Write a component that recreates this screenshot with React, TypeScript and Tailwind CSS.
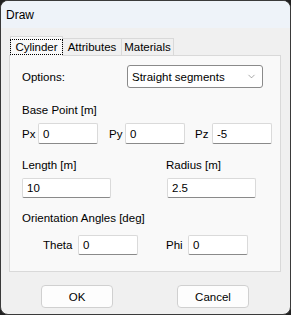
import { ChevronDown } from "lucide-react";

const font = { fontFamily: '"Liberation Sans", Arial, sans-serif' };

const Field = ({ value, w, h = "h-[21px]" }: { value: string; w: string; h?: string }) => (
  <div
    className={`${w} ${h} bg-white border border-[#dadada] border-b-[#8a8a8a] rounded-[2px] flex items-center px-[4px] text-[11.5px] text-black`}
  >
    {value}
  </div>
);

export default function App() {
  return (
    <div className="w-[291px] h-[315px] bg-[#202020]" style={font}>
      <div className="w-[291px] h-[315px] rounded-[8px] border border-[#3a3a3a] bg-[#f0f0f0] overflow-hidden flex flex-col text-[11.5px] text-black leading-[16px]">
        {/* title bar */}
        <div className="h-[27px] shrink-0 bg-[#eef3f9] flex items-center pl-[5px] text-[12px]">Draw</div>

        {/* tabs */}
        <div className="flex items-end pl-[9px] mt-[8px] h-[19px]">
          <div className="relative z-10 h-[20px] w-[53px] bg-[#f9f9f9] border border-[#d9d9d9] border-b-0 flex items-center justify-center mb-[-1px]">
            <span className="border border-dotted border-black px-[4px] leading-[14px]">Cylinder</span>
          </div>
          <div className="h-[17px] w-[59px] bg-[#f0f0f0] border border-[#d9d9d9] border-l-0 border-b-0 flex items-center justify-center">
            Attributes
          </div>
          <div className="h-[17px] w-[52px] bg-[#f0f0f0] border border-[#d9d9d9] border-l-0 border-b-0 flex items-center justify-center">
            Materials
          </div>
        </div>

        {/* panel */}
        <div className="ml-[8px] w-[272px] h-[217px] bg-[#f9f9f9] border border-[#d9d9d9] pl-[12px] pt-[9px]">
          <div className="flex items-center h-[23px]">
            <div className="w-[105px]">Options:</div>
            <div className="w-[136px] h-[23px] bg-white border border-[#8a8a8a] rounded-[3px] flex items-center justify-between pl-[4px] pr-[5px]">
              <span>Straight segments</span>
              <ChevronDown size={11} strokeWidth={1} className="text-[#444]" />
            </div>
          </div>

          <div className="mt-[14px]">Base Point [m]</div>
          <div className="mt-[5px] flex items-center">
            <span className="w-[16px]">Px</span>
            <Field value="0" w="w-[60px]" />
            <span className="w-[16px] ml-[11px]">Py</span>
            <Field value="0" w="w-[60px]" />
            <span className="w-[17px] ml-[10px]">Pz</span>
            <Field value="-5" w="w-[60px]" />
          </div>

          <div className="mt-[13px] flex">
            <div className="w-[144px]">
              <div>Length [m]</div>
              <div className="mt-[5px]">
                <Field value="10" w="w-[89px]" h="h-[20px]" />
              </div>
            </div>
            <div>
              <div>Radius [m]</div>
              <div className="mt-[5px] ml-[1px]">
                <Field value="2.5" w="w-[89px]" h="h-[20px]" />
              </div>
            </div>
          </div>

          <div className="mt-[12px]">Orientation Angles [deg]</div>
          <div className="mt-[9px] flex items-center">
            <span className="ml-[21px] w-[35px]">Theta</span>
            <Field value="0" w="w-[60px]" h="h-[20px]" />
            <span className="ml-[28px] w-[22px]">Phi</span>
            <Field value="0" w="w-[60px]" h="h-[20px]" />
          </div>
        </div>

        {/* buttons */}
        <div className="mt-[13px] flex pl-[40px]">
          <button className="w-[72px] h-[23px] bg-[#fdfdfd] border border-[#d0d0d0] rounded-[4px] flex items-center justify-center">
            OK
          </button>
          <button className="ml-[64px] w-[72px] h-[23px] bg-[#fdfdfd] border border-[#d0d0d0] rounded-[4px] flex items-center justify-center">
            Cancel
          </button>
        </div>
      </div>
    </div>
  );
}
